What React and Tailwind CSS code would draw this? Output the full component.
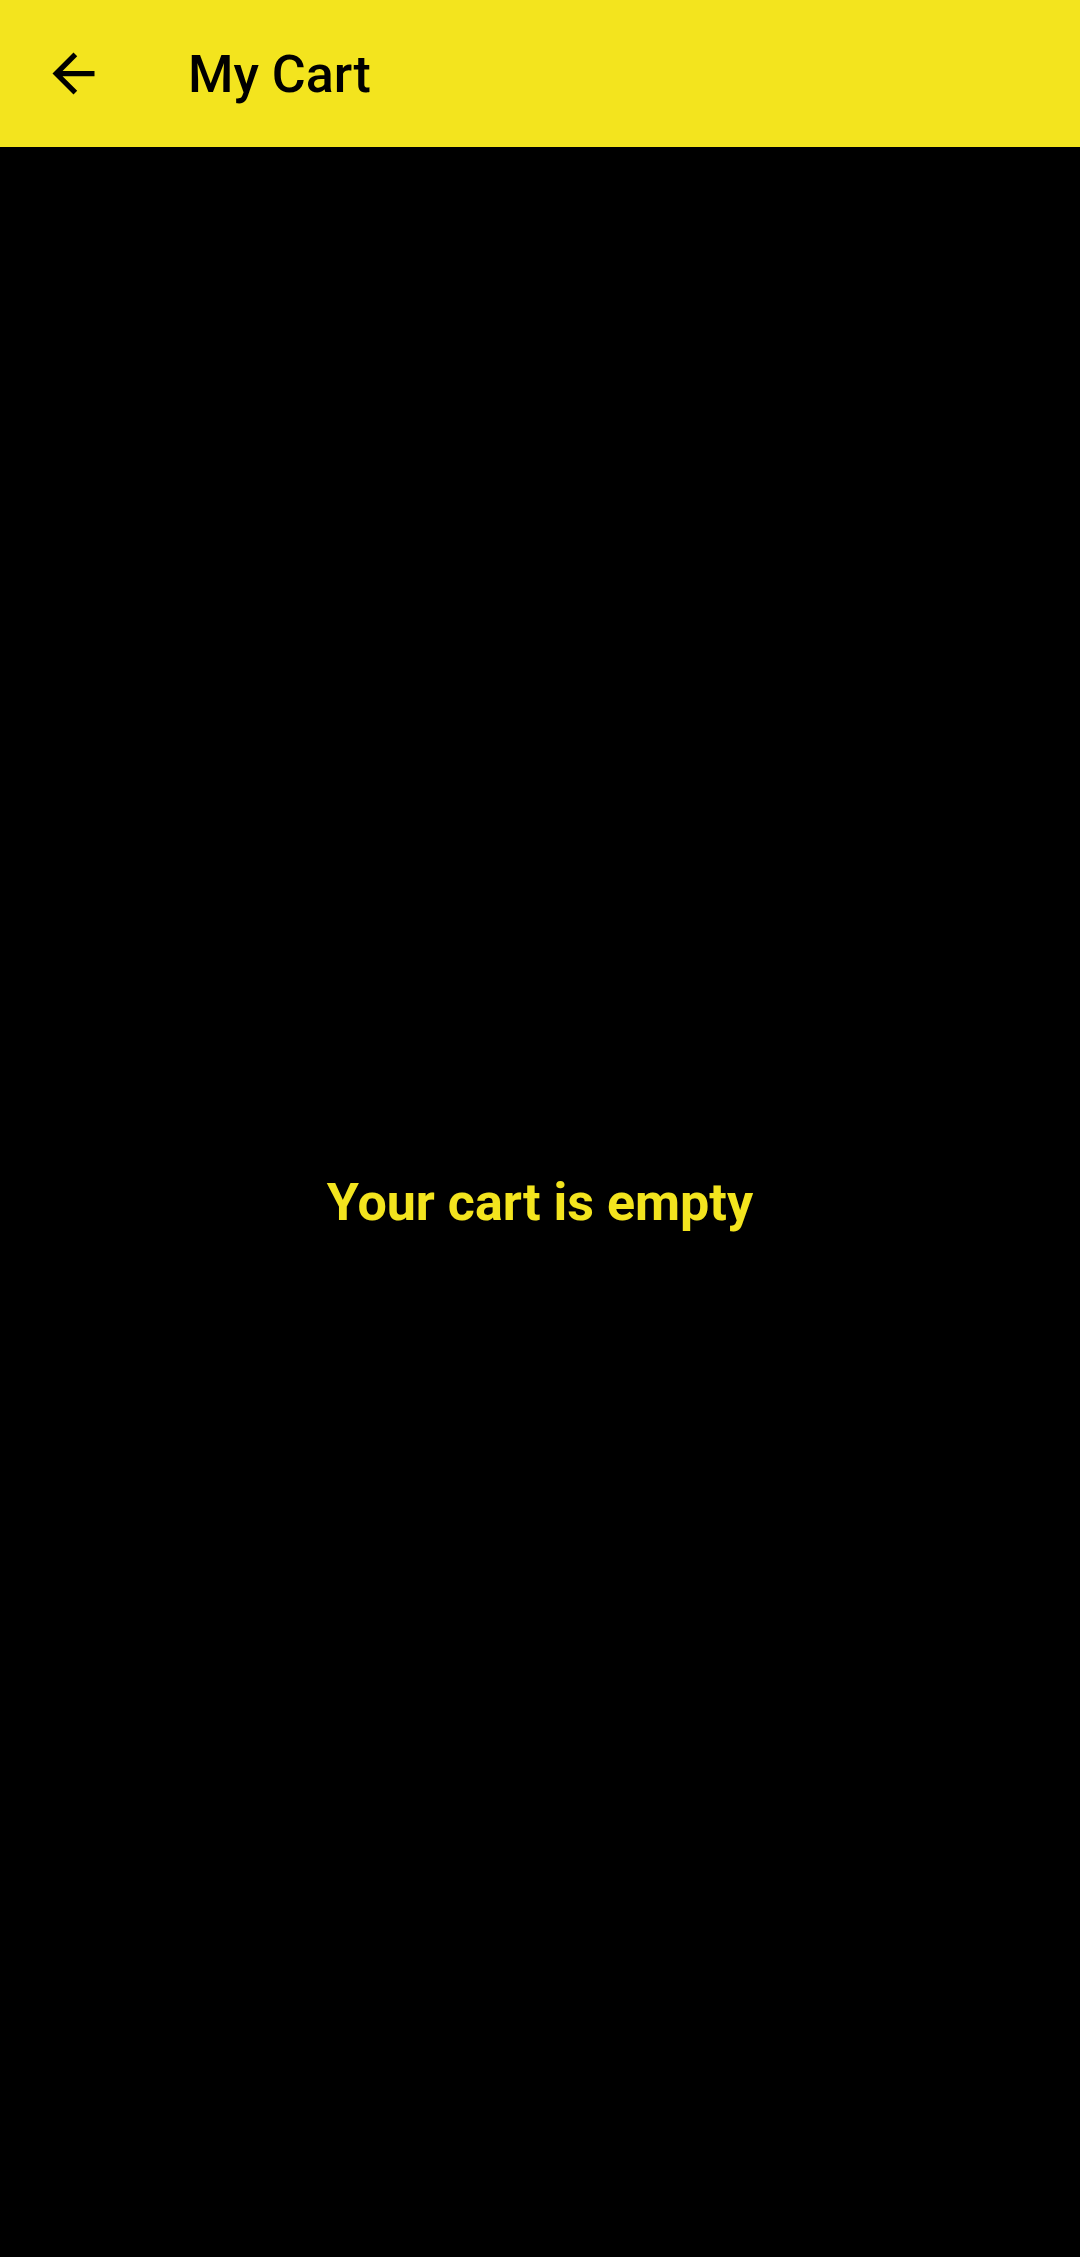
export default function App() {
  return (
    <div
      className="flex h-[2257px] w-[1080px] flex-col bg-black"
      style={{ fontFamily: "Roboto, 'Noto Sans', sans-serif" }}>
      <header className="flex h-[147px] shrink-0 items-center bg-[#f3e41e] pl-[42px]">
        <button className="flex h-[63px] w-[63px] items-center justify-center" aria-label="Back">
          <svg viewBox="0 0 24 24" className="h-[63px] w-[63px]" fill="#000">
            <path d="M20 11H7.83l5.59-5.59L12 4l-8 8 8 8 1.41-1.41L7.83 13H20v-2z" />
          </svg>
        </button>
        <h1 className="ml-[83px] mt-[3px] text-[52px] font-medium leading-none text-black">
          My Cart
        </h1>
      </header>
      <main className="flex flex-1 items-center justify-center">
        <p className="mt-[2px] text-[52px] font-bold leading-none text-[#f3e41e]">
          Your cart is empty
        </p>
      </main>
    </div>
  );
}
